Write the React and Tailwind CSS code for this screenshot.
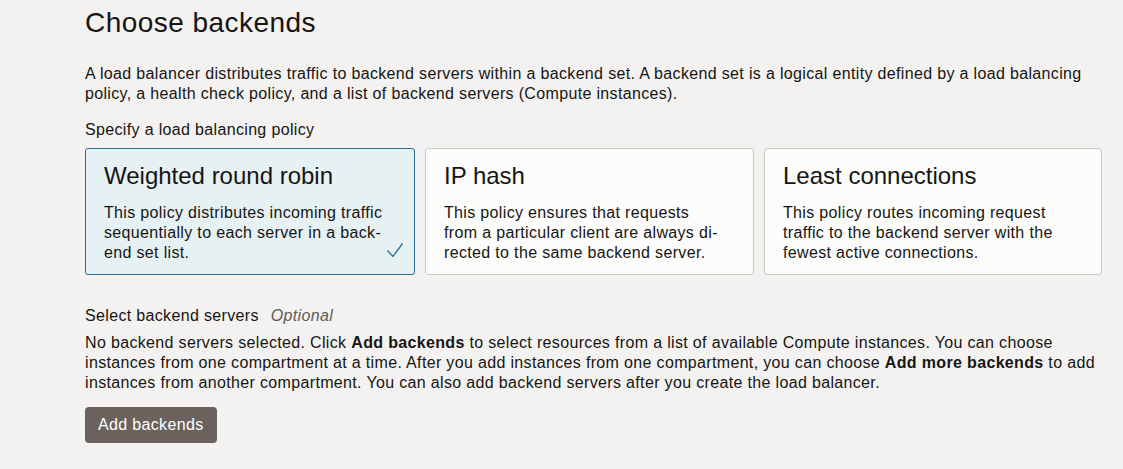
import { useState } from 'react';

const policies = [
  {
    title: "Weighted round robin",
    lines: ["This policy distributes incoming traffic", "sequentially to each server in a back-", "end set list."],
  },
  {
    title: "IP hash",
    lines: ["This policy ensures that requests", "from a particular client are always di-", "rected to the same backend server."],
  },
  {
    title: "Least connections",
    lines: ["This policy routes incoming request", "traffic to the backend server with the", "fewest active connections."],
  },
];

const App = () => {
  const [selected, setSelected] = useState(0);

  return (
    <div
      className="min-h-[469px] bg-[#f3f2f0] text-[#161513] pl-[85px] pt-[5px] tracking-[0.34px]"
      style={{ fontFamily: '"Liberation Sans", Arial, sans-serif' }}
    >
      <h1 className="text-[28px] leading-[36px] font-normal tracking-[0.45px]">Choose backends</h1>

      <p className="mt-[23px] text-[16px] leading-[20px]">
        A load balancer distributes traffic to backend servers within a backend set. A backend set is a logical entity defined by a load balancing
        <br />
        policy, a health check policy, and a list of backend servers (Compute instances).
      </p>

      <div className="mt-[16px] text-[16px] leading-[20px]">Specify a load balancing policy</div>

      {/* Policy cards */}
      <div className="mt-[8px] grid grid-cols-[330px_329px_338px] gap-[10px]">
        {policies.map((policy, index) => (
          <button
            key={index}
            onClick={() => setSelected(index)}
            className={`relative h-[127px] rounded-[3px] border text-left px-[18px] pt-[1px] ${
              selected === index
                ? "border-[#2b6f8e] bg-[#e6f1f3]"
                : "border-[#cbc8c4] bg-[#fcfcfb]"
            }`}
          >
            <div className="text-[24px] leading-[30px] tracking-normal">{policy.title}</div>
            <div className="mt-[12px] text-[16px] leading-[20px] text-[#161513]">
              {policy.lines.map((line, i) => (
                <div key={i}>{line}</div>
              ))}
            </div>
            {selected === index && (
              <svg
                className="absolute right-[10px] bottom-[16px]"
                width="18"
                height="16"
                viewBox="0 0 18 16"
                fill="none"
              >
                <path d="M1.5 8.5 L7 14.5 L16.5 1.5" stroke="#2d7a98" strokeWidth="1.4" />
              </svg>
            )}
          </button>
        ))}
      </div>

      <div className="mt-[31px] text-[16px] leading-[20px]">
        Select backend servers
        <span className="ml-[12px] italic text-[#5f5b57]">Optional</span>
      </div>

      <p className="mt-[7px] text-[16px] leading-[20px]">
        No backend servers selected. Click <b>Add backends</b> to select resources from a list of available Compute instances. You can choose
        <br />
        instances from one compartment at a time. After you add instances from one compartment, you can choose <b>Add more backends</b> to add
        <br />
        instances from another compartment. You can also add backend servers after you create the load balancer.
      </p>

      <button className="mt-[14px] h-[36px] px-[13px] rounded-[4px] bg-[#6b625e] text-white text-[16px] leading-[20px]">
        Add backends
      </button>
    </div>
  );
};

export default App;
